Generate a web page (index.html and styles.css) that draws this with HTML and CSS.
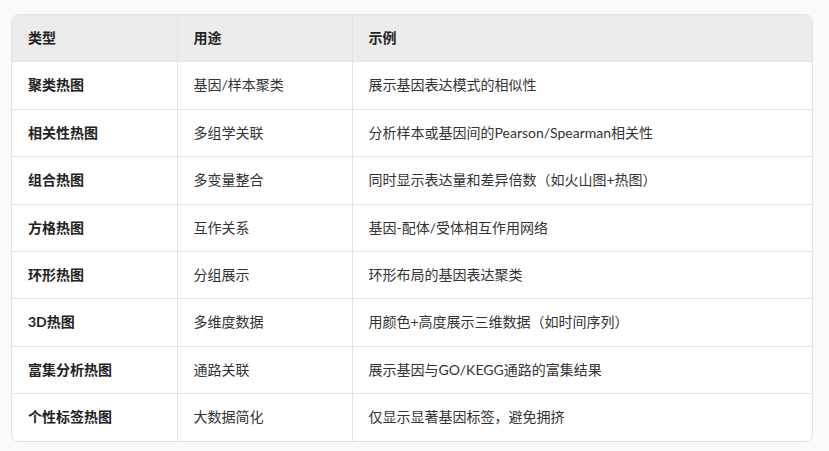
FILE: index.html
```html
<!DOCTYPE html>
<html lang="zh">
<head>
<meta charset="utf-8">
<link rel="stylesheet" href="styles.css">
</head>
<body>
<div class="wrap">
<table class="tbl">
<colgroup><col class="c1"><col class="c2"><col class="c3"></colgroup>
<thead>
<tr><th>类型</th><th>用途</th><th>示例</th></tr>
</thead>
<tbody>
<tr><td class="name">聚类热图</td><td>基因/样本聚类</td><td>展示基因表达模式的相似性</td></tr>
<tr><td class="name">相关性热图</td><td>多组学关联</td><td>分析样本或基因间的Pearson/Spearman相关性</td></tr>
<tr><td class="name">组合热图</td><td>多变量整合</td><td>同时显示表达量和差异倍数（如火山图+热图）</td></tr>
<tr><td class="name">方格热图</td><td>互作关系</td><td>基因-配体/受体相互作用网络</td></tr>
<tr><td class="name">环形热图</td><td>分组展示</td><td>环形布局的基因表达聚类</td></tr>
<tr><td class="name">3D热图</td><td>多维度数据</td><td>用颜色+高度展示三维数据（如时间序列）</td></tr>
<tr><td class="name">富集分析热图</td><td>通路关联</td><td>展示基因与GO/KEGG通路的富集结果</td></tr>
<tr><td class="name">个性标签热图</td><td>大数据简化</td><td>仅显示显著基因标签，避免拥挤</td></tr>
</tbody>
</table>
</div>
</body>
</html>
```
FILE: styles.css
```css
html, body {
  margin: 0;
  padding: 0;
  background: #fafafa;
}
body {
  padding: 14px 0 0 11px;
  font-family: Lato, "Noto Sans CJK SC", sans-serif;
  font-size: 14px;
  color: #333;
}
.wrap {
  width: 800px;
  border: 1px solid #e3e3e3;
  border-radius: 8px;
  overflow: hidden;
  background: #fff;
}
.tbl {
  width: 100%;
  border-collapse: collapse;
  table-layout: fixed;
}
.c1 { width: 165px; }
.c2 { width: 175px; }
.c3 { width: 460px; }
.tbl th, .tbl td {
  text-align: left;
  padding: 12px 16px;
  line-height: 22.4px;
  border-left: 1px solid #e3e3e3;
  border-top: 1px solid #e3e3e3;
  white-space: nowrap;
}
.tbl th:first-child, .tbl td:first-child { border-left: none; }
.tbl thead th {
  border-top: none;
  background: #ececec;
  font-weight: 700;
  color: #222;
  height: 22px;
}
.tbl td.name {
  font-weight: 700;
  color: #222;
}
```
